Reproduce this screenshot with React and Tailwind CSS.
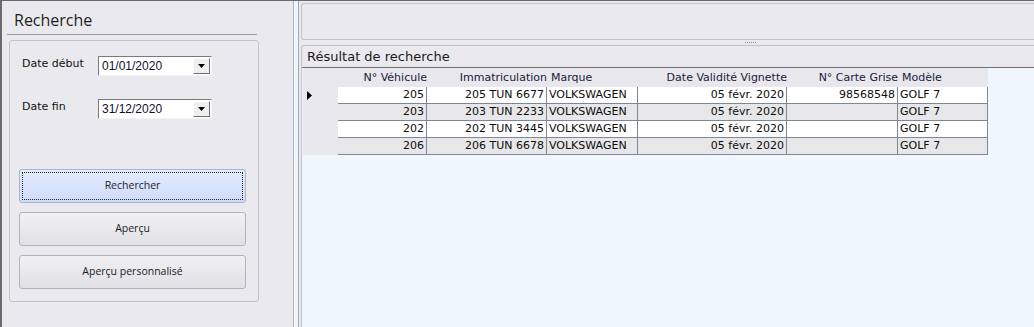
import React from "react";

const cols = [
  { w: 89, h: "N° Véhicule", ha: "right", a: "right" },
  { w: 120, h: "Immatriculation", ha: "right", a: "right" },
  { w: 91, h: "Marque", ha: "left", a: "left" },
  { w: 149, h: "Date Validité Vignette", ha: "right", a: "right" },
  { w: 111, h: "N° Carte Grise", ha: "right", a: "right" },
  { w: 90, h: "Modèle", ha: "left", a: "left" },
];

const rows = [
  ["205", "205 TUN 6677", "VOLKSWAGEN", "05 févr. 2020", "98568548", "GOLF 7"],
  ["203", "203 TUN 2233", "VOLKSWAGEN", "05 févr. 2020", "", "GOLF 7"],
  ["202", "202 TUN 3445", "VOLKSWAGEN", "05 févr. 2020", "", "GOLF 7"],
  ["206", "206 TUN 6678", "VOLKSWAGEN", "05 févr. 2020", "", "GOLF 7"],
];

function DateInput({ value }) {
  return (
    <div className="relative w-[114px] h-[20px] bg-white border-t border-l border-t-[#7a7a7a] border-l-[#7a7a7a] border-r border-b border-r-[#f4f4f4] border-b-[#f4f4f4] flex items-center">
      <span className="pl-[3px] text-[12px] leading-[16px] text-[#101030]" style={{ fontFamily: '"Liberation Sans", Arial, sans-serif' }}>
        {value}
      </span>
      <div className="absolute right-[1px] top-[1px] w-[17px] h-[16px] bg-[#efefef] border border-t-white border-l-white border-r-[#6f6f6f] border-b-[#6f6f6f] flex items-center justify-center">
        <svg width="7" height="4" viewBox="0 0 7 4">
          <polygon points="0,0 7,0 3.5,4" fill="#000" />
        </svg>
      </div>
    </div>
  );
}

function Btn({ children, active }) {
  return (
    <div
      className={
        "h-[34px] w-[227px] rounded-[3px] border flex items-center justify-center text-[10.5px] text-[#1b1b2a] " +
        (active
          ? "border-[#a8b4cc] bg-gradient-to-b from-[#e4ecfd] to-[#cfdcfa] p-[2px]"
          : "border-[#b4b4b8] bg-gradient-to-b from-[#f1f1f3] to-[#e1e1e5]")
      }
      style={{ fontFamily: '"Open Sans", "Noto Sans", sans-serif' }}
    >
      {active ? (
        <div className="w-full h-full border border-dotted border-[#222] flex items-center justify-center">{children}</div>
      ) : (
        children
      )}
    </div>
  );
}

export default function App() {
  const dv = { fontFamily: '"DejaVu Sans", Verdana, sans-serif' };
  return (
    <div className="w-[1034px] h-[327px] overflow-hidden bg-[#eaeaee] border-t border-t-[#6a6a6a] border-l-2 border-l-[#6a6a6a] flex">
      {/* Left panel */}
      <div className="w-[292px] h-full border-r border-[#b3b3b8] flex flex-col">
        <div
          className="ml-[5px] w-[250px] border-b border-[#9c9ca0] pt-[8px] pb-[3px] pl-[7px] text-[16px] leading-[22px] text-[#1e1e1e]"
          style={{ fontFamily: '"Open Sans", "Noto Sans", sans-serif' }}
        >
          Recherche
        </div>
        <div className="ml-[7px] mt-[5px] w-[250px] h-[262px] border border-[#c4c4c8] rounded-[3px] flex flex-col">
          <div className="flex items-center mt-[15px] pl-[12px]" style={dv}>
            <div className="w-[76px] text-[11px] text-[#111] leading-[14px] -mt-[5px]">Date début</div>
            <DateInput value="01/01/2020" />
          </div>
          <div className="flex items-center mt-[23px] pl-[12px]" style={dv}>
            <div className="w-[76px] text-[11px] text-[#111] leading-[14px] -mt-[5px]">Date fin</div>
            <DateInput value="31/12/2020" />
          </div>
          <div className="flex flex-col gap-[9px] mt-[50px] pl-[9px]">
            <Btn active>Rechercher</Btn>
            <Btn>Aperçu</Btn>
            <Btn>Aperçu personnalisé</Btn>
          </div>
        </div>
      </div>

      {/* Splitter strip */}
      <div className="w-[4px] h-full bg-[#eef5fd]" />

      {/* Right panel */}
      <div className="flex-1 h-full border-l border-[#a8a8ae] pl-[2px] flex flex-col">
        <div className="mt-[2px] h-[37px] border border-r-0 border-[#c3c3c8] rounded-l-[3px] bg-[#eaeaee]" />
        <div className="h-[5px] flex items-center pl-[444px]">
          <div className="flex gap-[1px]">
            {[0, 1, 2, 3, 4, 5].map((i) => (
              <div key={i} className="w-[1px] h-[1px] bg-[#8e8e94]" />
            ))}
          </div>
        </div>
        <div className="flex-1 border-t border-l border-[#c3c3c8] rounded-tl-[3px] flex flex-col" style={dv}>
          <div className="h-[21px] pl-[5px] text-[13px] leading-[21px] text-[#1a1a1a]">Résultat de recherche</div>
          <div className="flex-1 border-t border-[#6e6e74] bg-[#eff6fe] pl-[1px]">
            {/* header */}
            <div className="flex h-[19px]">
              <div className="w-[35px] h-full bg-[#e8e8ec]" />
              {cols.map((c, i) => (
                <div
                  key={i}
                  className={
                    "h-full bg-[#e8e8ec] text-[11px] leading-[19px] text-[#20183c] whitespace-nowrap " +
                    (c.ha === "right" ? "text-right pr-[0px]" : "text-left pl-[4px]")
                  }
                  style={{ width: c.w }}
                >
                  {c.h}
                </div>
              ))}
            </div>
            {rows.map((r, ri) => (
              <div key={ri} className="flex h-[17px]">
                <div className="w-[35px] h-full bg-[#e8e8ec] flex items-center pl-[4px]">
                  {ri === 0 && (
                    <svg width="5" height="9" viewBox="0 0 5 9">
                      <polygon points="0,0 5,4.5 0,9" fill="#000" />
                    </svg>
                  )}
                </div>
                {r.map((v, ci) => (
                  <div
                    key={ci}
                    className={
                      "h-full border-r border-b border-[#7d8896] text-[11px] leading-[16px] text-[#0c0c0c] whitespace-nowrap overflow-hidden " +
                      (ri % 2 === 0 ? "bg-white " : "bg-[#e7e7e9] ") +
                      (cols[ci].a === "right" ? "text-right pr-[2px]" : "text-left pl-[2px]")
                    }
                    style={{ width: cols[ci].w }}
                  >
                    {v}
                  </div>
                ))}
              </div>
            ))}
          </div>
        </div>
      </div>
    </div>
  );
}
